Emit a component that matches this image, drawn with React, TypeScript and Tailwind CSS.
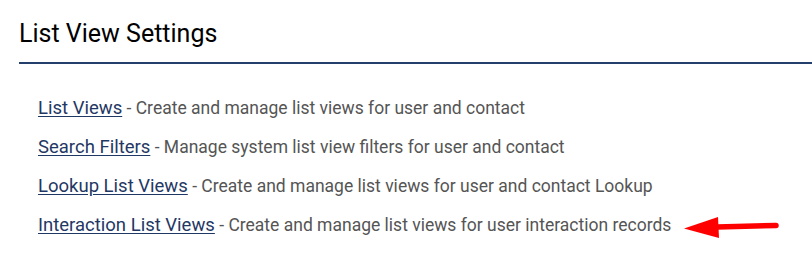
import React from "react";

const items = [
  { link: "List Views", desc: "Create and manage list views for user and contact" },
  { link: "Search Filters", desc: "Manage system list view filters for user and contact" },
  { link: "Lookup List Views", desc: "Create and manage list views for user and contact Lookup" },
  { link: "Interaction List Views", desc: "Create and manage list views for user interaction records" },
];

export default function App() {
  return (
    <div className="w-[812px] h-[265px] bg-white font-['Roboto',sans-serif] overflow-hidden">
      <div className="pl-[19px] pt-[19px]">
        <h1 className="text-[25px] leading-[30px] text-black font-normal">List View Settings</h1>
        <div className="mt-[13px] h-[2px] bg-[#243f6b]" />
      </div>
      <ul className="pl-[38px] pt-[32px] flex flex-col gap-[15px]">
        {items.map((it, i) => (
          <li key={i} className="flex items-center h-[24px] text-[17.5px] leading-[24px] text-[#555555]">
            <a href="#" className="text-[18.5px] text-[#1f3864] underline underline-offset-2">{it.link}</a>
            <span>&nbsp;- {it.desc}</span>
            {i === 3 && (
              <svg className="ml-[13px] -my-[2px] translate-y-[3px]" width="96" height="22" viewBox="0 0 96 22">
                <path d="M33 10 L92 8.5" stroke="#ff0000" strokeWidth="5.5" strokeLinecap="round" />
                <polygon points="0,11.5 34,0 35,21" fill="#ff0000" />
              </svg>
            )}
          </li>
        ))}
      </ul>
    </div>
  );
}
